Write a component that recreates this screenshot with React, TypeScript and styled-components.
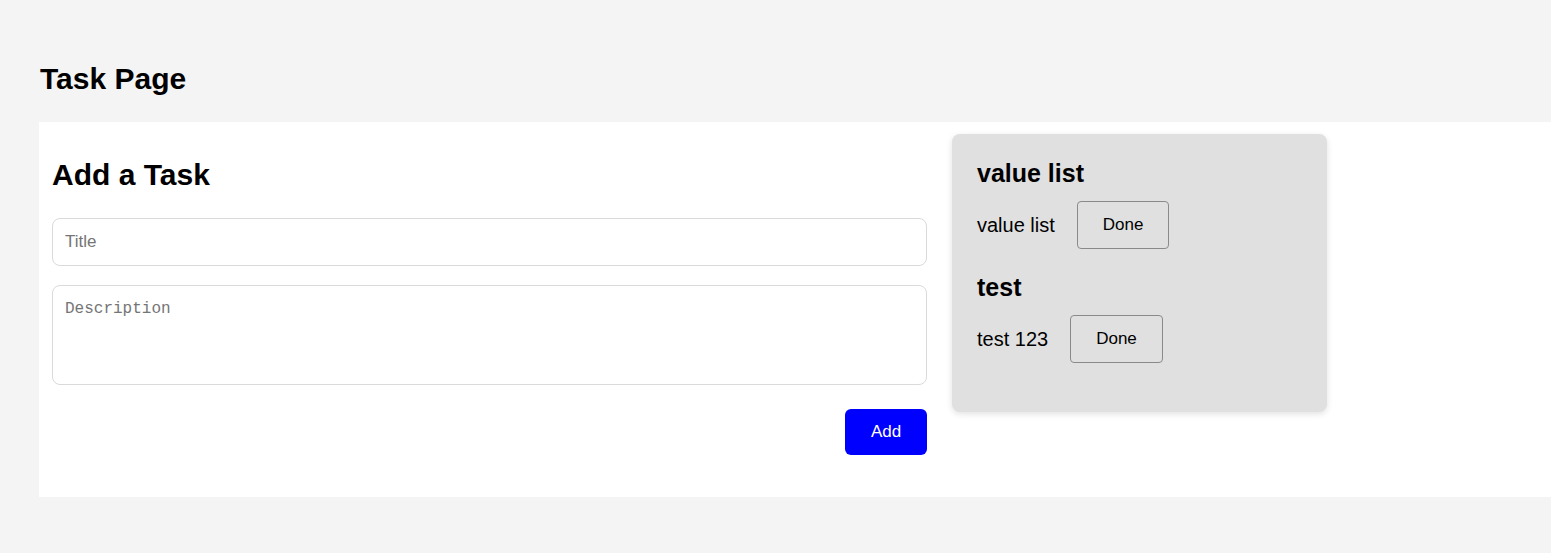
import styled, { createGlobalStyle } from 'styled-components'

type Task = {
  id: number
  title: string
  description: string
}

const tasks: Array<Task> = [
  { id: 1, title: 'value list', description: 'value list' },
  { id: 2, title: 'test', description: 'test 123' },
]

const GlobalStyle = createGlobalStyle`
  html, body {
    margin: 0;
    padding: 0;
    background: #f4f4f4;
    font-family: 'Liberation Sans', Arial, sans-serif;
    color: #000;
  }
  * {
    box-sizing: border-box;
  }
`

const App = () => {
  return (
    <>
      <GlobalStyle />
      <Page>
        <PageTitle>Task Page</PageTitle>
        <Panel>
          <TaskForm onSubmit={(e) => e.preventDefault()}>
            <FormTitle>Add a Task</FormTitle>
            <TitleInput type='text' placeholder='Title' />
            <DescriptionInput placeholder='Description' />
            <Actions>
              <AddButton type='submit'>Add</AddButton>
            </Actions>
          </TaskForm>
          <TaskList>
            {tasks.map((task) => (
              <TaskItem key={task.id}>
                <TaskTitle>{task.title}</TaskTitle>
                <TaskRow>
                  <TaskText>{task.description}</TaskText>
                  <DoneButton>Done</DoneButton>
                </TaskRow>
              </TaskItem>
            ))}
          </TaskList>
        </Panel>
      </Page>
    </>
  )
}

export default App

const Page = styled.div`
  min-height: 553px;
  padding: 62px 0 56px 39px;
`

const PageTitle = styled.h1`
  margin: 0 0 26px 1px;
  font-size: 30px;
  line-height: 34px;
  font-weight: 700;
`

const Panel = styled.div`
  display: flex;
  align-items: flex-start;
  gap: 25px;
  background: #fff;
  padding: 12px 0 12px 13px;
`

const TaskForm = styled.form`
  width: 875px;
  flex-shrink: 0;
  padding-bottom: 30px;
`

const FormTitle = styled.h2`
  margin: 24px 0 26px;
  font-size: 30px;
  line-height: 34px;
  font-weight: 700;
`

const fieldBase = `
  display: block;
  width: 100%;
  border: 1px solid #dadada;
  border-radius: 8px;
  padding: 12px;
  background: #fff;
  outline: none;
  color: #000;
  &::placeholder {
    color: #757575;
  }
`

const TitleInput = styled.input`
  ${fieldBase}
  height: 48px;
  margin-bottom: 19px;
  font-family: 'Liberation Sans', Arial, sans-serif;
  font-size: 17px;
`

const DescriptionInput = styled.textarea`
  ${fieldBase}
  height: 100px;
  margin-bottom: 24px;
  resize: none;
  font-family: 'Liberation Mono', monospace;
  font-size: 16px;
  line-height: 22px;
`

const Actions = styled.div`
  display: flex;
  justify-content: flex-end;
`

const AddButton = styled.button`
  width: 82px;
  height: 46px;
  border: none;
  border-radius: 6px;
  background: #0000ff;
  color: #fff;
  font-family: 'Liberation Sans', Arial, sans-serif;
  font-size: 17px;
  cursor: pointer;
`

const TaskList = styled.div`
  width: 375px;
  flex-shrink: 0;
  background: #e0e0e0;
  border-radius: 8px;
  box-shadow: 0 2px 6px rgba(0, 0, 0, 0.12);
  padding: 25px 24px 25px 25px;
`

const TaskItem = styled.div`
  margin-bottom: 24px;
`

const TaskTitle = styled.h3`
  margin: 0 0 13px;
  font-size: 25px;
  line-height: 29px;
  font-weight: 700;
`

const TaskRow = styled.div`
  display: flex;
  align-items: center;
  gap: 22px;
`

const TaskText = styled.span`
  font-size: 20px;
`

const DoneButton = styled.button`
  height: 48px;
  padding: 0 25px;
  border: 1px solid #8a8a8a;
  border-radius: 4px;
  background: transparent;
  color: #000;
  font-family: 'Liberation Sans', Arial, sans-serif;
  font-size: 17px;
  cursor: pointer;
`
